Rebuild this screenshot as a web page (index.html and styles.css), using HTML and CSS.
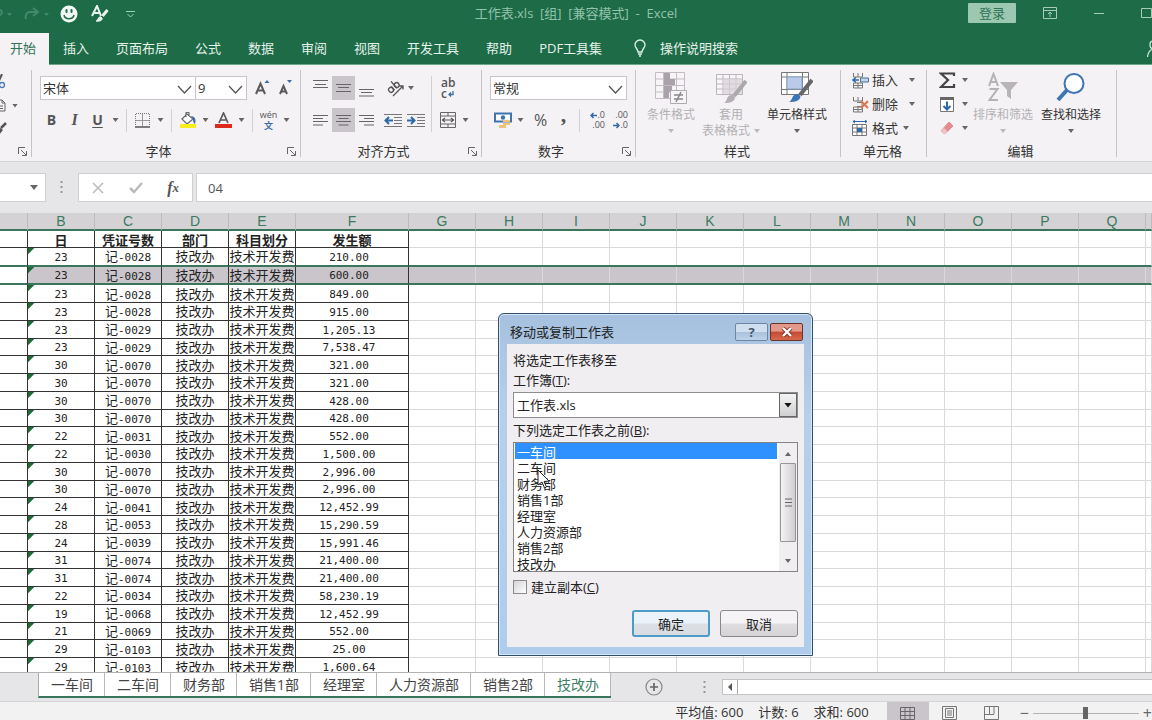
FILE: index.html
```html
<!DOCTYPE html>
<html lang="zh-CN">
<head>
<meta charset="utf-8">
<title>工作表.xls - Excel</title>
<link rel="stylesheet" href="styles.css">
</head>
<body>
<header class="titlebar">
  <div class="quick">
    <svg class="faded" width="14" height="14" viewBox="0 0 14 14"><path d="M-6 8 H-1 C3 8 3 2 -2 3" fill="none" stroke="currentColor" stroke-width="2"/><path d="M7 6h5l-2.500 3z" fill="currentColor"/></svg>
    <svg class="faded" width="28" height="14" viewBox="0 0 28 14"><path d="M14 5H7C3 5 2 9 3 12M10 1l5 4-5 4" fill="none" stroke="currentColor" stroke-width="2"/><path d="M21 6h5l-2.500 3z" fill="currentColor"/></svg>
    <svg width="18" height="18" viewBox="0 0 18 18"><circle cx="9" cy="9" r="8.500" fill="#f3faf5"/><rect x="5.500" y="4" width="2" height="4" rx="1" fill="#1e6b48"/><rect x="10.500" y="4" width="2" height="4" rx="1" fill="#1e6b48"/><path d="M4 10c1 5 9 5 10 0" fill="none" stroke="#1e6b48" stroke-width="1.500"/></svg>
    <svg width="18" height="18" viewBox="0 0 18 18"><path d="M1 11L6 1l4 10M3 8h6" fill="none" stroke="#e9f5ee" stroke-width="2"/><path d="M16.500 5l-5 6" stroke="#e9f5ee" stroke-width="3"/><path d="M5 16c2 0 2-5 5-4 3 2 0 5-5 4z" fill="#e9f5ee" stroke="#e9f5ee"/></svg>
    <svg width="9" height="9" viewBox="0 0 9 9"><path d="M0 1.500h9M1.500 4l3 3 3-3" fill="none" stroke="#9fd0b5"/></svg>
  </div>
  <h1 class="doc-title">工作表.xls&nbsp; [组]&nbsp; [兼容模式]&nbsp; -&nbsp; Excel</h1>
  <div class="window-tools">
    <button class="login">登录</button>
    <button class="wbtn" aria-label="功能区显示选项"><svg width="14" height="12" viewBox="0 0 14 12"><path d="M.5.500h13v11H.500zM.5 3.500h13M7 10V5M5 7l2-2 2 2" fill="none" stroke="currentColor"/></svg></button>
    <button class="wbtn" aria-label="最小化"><svg width="12" height="12" viewBox="0 0 12 12"><path d="M1 6.500h10" stroke="currentColor"/></svg></button>
    <button class="wbtn" aria-label="最大化"><svg width="11" height="12" viewBox="0 0 11 12"><path d="M.5 1.500h10v9H.500z" fill="none" stroke="currentColor"/></svg></button>
  </div>
</header>
<nav class="tabs">
  <button class="tab active">开始</button>
  <button class="tab">插入</button>
  <button class="tab">页面布局</button>
  <button class="tab">公式</button>
  <button class="tab">数据</button>
  <button class="tab">审阅</button>
  <button class="tab">视图</button>
  <button class="tab">开发工具</button>
  <button class="tab">帮助</button>
  <button class="tab">PDF工具集</button>
  <button class="tell-me"><svg width="12" height="18" viewBox="0 0 12 18"><path d="M4 13c0-3-3-4-3-7a5 5 0 0 1 10 0c0 3-3 4-3 7zM4 15h4M5 17h2" fill="none" stroke="currentColor" stroke-width="1.300"/></svg>操作说明搜索</button>
  <svg class="share" width="5" height="18" viewBox="0 0 5 18"><path d="M6 1C2 1 2 8 6 9C2 10 1 13 .500 17" fill="none" stroke="#cfe6d9" stroke-width="1.300"/></svg>
</nav>
<section class="ribbon">
  <div class="group clipboard">
    <div class="group-body clip-tools">
      <svg width="7" height="16" viewBox="0 0 7 16"><path d="M2 0L-2 9" stroke="#555" stroke-width="2"/><circle cx="2" cy="11" r="2.500" fill="none" stroke="#4a7ab5" stroke-width="1.300"/></svg>
      <div class="clip-row"><svg width="6" height="13" viewBox="0 0 6 13"><path d="M-2 1h4l3 3v8h-7M2 1v3h3M-1 7h4M-1 9.500h4" fill="none" stroke="#666"/></svg><i class="caret"></i></div>
      <svg width="7" height="14" viewBox="0 0 7 14"><path d="M6 2L1 7" stroke="#555" stroke-width="2.500"/><path d="M-1 6l4 3-4 5z" fill="#555"/></svg>
    </div>
    <div class="group-foot"><span></span><button class="launch" aria-label="剪贴板设置"><svg width="9" height="9" viewBox="0 0 9 9"><path d="M.5 7V.500H7M3 3l5 5M8.500 4v4.500H4" fill="none" stroke="#666"/></svg></button></div>
  </div>

  <div class="group font">
    <div class="group-body">
      <div class="row">
        <span class="combo font-name"><select aria-label="字体"><option>宋体</option></select><svg width="15" height="9" viewBox="0 0 15 9"><path d="M1 1l6.500 7L14 1" fill="none" stroke="#555" stroke-width="1.300"/></svg></span>
        <span class="combo font-size"><select aria-label="字号"><option>9</option></select><svg width="15" height="9" viewBox="0 0 15 9"><path d="M1 1l6.500 7L14 1" fill="none" stroke="#555" stroke-width="1.300"/></svg></span>
        <button class="ib grow" aria-label="增大字号"><svg width="16" height="17" viewBox="0 0 16 17"><path d="M1 14L5.500 3.500 10 14M2.500 10.500h6" fill="none" stroke="#5a5a5a" stroke-width="2"/><path d="M9.500 3L12 0l2.500 3z" fill="#3a6ea5"/></svg></button>
        <button class="ib" aria-label="减小字号"><svg width="16" height="17" viewBox="0 0 16 17"><path d="M2 14l3.500-8L9 14M3 11.500h5" fill="none" stroke="#5a5a5a" stroke-width="2"/><path d="M9 0h5l-2.500 3z" fill="#3a6ea5"/></svg></button>
      </div>
      <div class="row">
        <button class="ib bold">B</button><button class="ib italic">I</button><button class="ib under">U</button><button class="cb" aria-label="下划线选项"><i class="caret"></i></button>
        <i class="sep"></i>
        <button class="ib" aria-label="边框"><svg width="15" height="15" viewBox="0 0 15 15"><path d="M1 .500h13M.5 1v12M14.500 1v12" stroke="#777" stroke-dasharray="1 1"/><path d="M7.500 1v12M1 7.500h13" stroke="#999"/><path d="M0 14h15" stroke="#555" stroke-width="1.500"/></svg></button><button class="cb" aria-label="边框选项"><i class="caret"></i></button>
        <i class="sep"></i>
        <button class="ib" aria-label="填充颜色"><svg width="18" height="17" viewBox="0 0 18 17"><path d="M3 7l5-5 6 5-6 5zM7 5V1c0-1 3-1 3 0v3" fill="#fff" stroke="#666" stroke-width="1.200"/><path d="M12 4c5 1 5 4 4 8-2-1-2-4-2-5z" fill="#3a6ea5"/><path d="M1 12h16v4H1z" fill="#f8ee1f"/></svg></button><button class="cb" aria-label="填充选项"><i class="caret"></i></button>
        <button class="ib" aria-label="字体颜色"><svg width="17" height="17" viewBox="0 0 17 17"><path d="M4 11L8.500 1 13 11M5.500 8h6" fill="none" stroke="#5a5a5a" stroke-width="1.700"/><path d="M0 12h17v4H0z" fill="#dc2a1c"/></svg></button><button class="cb" aria-label="颜色选项"><i class="caret"></i></button>
        <i class="sep"></i>
        <button class="ib phonetic"><span>wén</span><b>文</b></button><button class="cb" aria-label="拼音选项"><i class="caret"></i></button>
      </div>
    </div>
    <div class="group-foot"><span>字体</span><button class="launch" aria-label="字体设置"><svg width="9" height="9" viewBox="0 0 9 9"><path d="M.5 7V.500H7M3 3l5 5M8.500 4v4.500H4" fill="none" stroke="#666"/></svg></button></div>
  </div>

  <div class="group align">
    <div class="group-body split">
      <div class="stack">
        <div class="row">
          <button class="ib" aria-label="顶端对齐"><svg width="15" height="17" viewBox="0 0 15 17"><path d="M0 .500h15M2 4.500h11M0 7.500h15" stroke="#666" stroke-width="1.200"/></svg></button>
          <button class="ib on" aria-label="垂直居中"><svg width="15" height="17" viewBox="0 0 15 17"><path d="M0 4.500h15M2 7.500h11M0 11.500h15" stroke="#666" stroke-width="1.200"/></svg></button>
          <button class="ib" aria-label="底端对齐"><svg width="15" height="17" viewBox="0 0 15 17"><path d="M0 9.500h15M2 12.500h11M0 16h15" stroke="#666" stroke-width="1.200"/></svg></button>
          <button class="ib orient" aria-label="方向"><svg width="18" height="17" viewBox="0 0 18 17"><g transform="rotate(-40 7 8)" fill="none" stroke="#555" stroke-width="1.400"><ellipse cx="3.500" cy="7.500" rx="2.300" ry="2.500"/><path d="M6 5v5M9 1v9"/><ellipse cx="11" cy="7.500" rx="2.300" ry="2.500"/></g><path d="M6 16L16 6M12.500 6H16v3.500" fill="none" stroke="#555" stroke-width="1.300"/></svg></button><button class="cb tight" aria-label="方向选项"><i class="caret"></i></button>
        </div>
        <div class="row">
          <button class="ib" aria-label="左对齐"><svg width="15" height="15" viewBox="0 0 15 15"><path d="M0 2.500h15M0 5.500h10M0 8.500h15M0 12h10" stroke="#666" stroke-width="1.200"/></svg></button>
          <button class="ib on" aria-label="居中"><svg width="15" height="15" viewBox="0 0 15 15"><path d="M0 2.500h15M2.500 5.500h10M0 8.500h15M2.500 12h10" stroke="#666" stroke-width="1.200"/></svg></button>
          <button class="ib" aria-label="右对齐"><svg width="15" height="15" viewBox="0 0 15 15"><path d="M0 2.500h15M5 5.500h10M0 8.500h15M5 12h10" stroke="#666" stroke-width="1.200"/></svg></button>
          <button class="ib indent" aria-label="减少缩进"><svg width="18" height="15" viewBox="0 0 18 15"><path d="M0 1.500h18M10 4.500h8M10 7.500h8M10 10.500h8M0 13.500h18" stroke="#777"/><path d="M9 7.500H2M5 4L1.500 7.500 5 11" fill="none" stroke="#2f68a8" stroke-width="2"/></svg></button>
          <button class="ib" aria-label="增加缩进"><svg width="18" height="15" viewBox="0 0 18 15"><path d="M0 1.500h18M10 4.500h8M10 7.500h8M10 10.500h8M0 13.500h18" stroke="#777"/><path d="M0 7.500h7M4 4l3.500 3.500L4 11" fill="none" stroke="#2f68a8" stroke-width="2"/></svg></button>
        </div>
      </div>
      <i class="sep tall"></i>
      <div class="stack">
        <div class="row"><button class="ib wrap"><span>ab</span><span>c<svg width="6" height="6" viewBox="0 0 6 6"><path d="M5 0v3.500H1M3 1.500l-2 2 2 2" fill="none" stroke="#3a6ea5" stroke-width="1.300"/></svg></span></button></div>
        <div class="row"><button class="ib" aria-label="合并后居中"><svg width="16" height="16" viewBox="0 0 16 16"><path d="M.5.500h15v15H.500zM.5 4h15M.5 12h15M8 .500V4M8 12v3.500" fill="none" stroke="#666"/><path d="M2.500 8h11M5 6L2.500 8 5 10M11 6l2.500 2L11 10" fill="none" stroke="#555" stroke-width="1.200"/></svg></button><button class="cb" aria-label="合并选项"><i class="caret"></i></button></div>
      </div>
    </div>
    <div class="group-foot"><span>对齐方式</span><button class="launch" aria-label="对齐设置"><svg width="9" height="9" viewBox="0 0 9 9"><path d="M.5 7V.500H7M3 3l5 5M8.500 4v4.500H4" fill="none" stroke="#666"/></svg></button></div>
  </div>

  <div class="group number">
    <div class="group-body">
      <div class="row"><span class="combo format"><select aria-label="数字格式"><option>常规</option></select><svg width="15" height="9" viewBox="0 0 15 9"><path d="M1 1l6.500 7L14 1" fill="none" stroke="#555" stroke-width="1.300"/></svg></span></div>
      <div class="row">
        <button class="ib money" aria-label="会计格式"><svg width="18" height="17" viewBox="0 0 18 17"><path d="M1 1.500h16v8H1z" fill="#fff" stroke="#3f74ad" stroke-width="2"/><circle cx="9" cy="5.500" r="2.200" fill="#3f74ad"/><path d="M9 8h7v2H9zM9 11h7v2H9zM5 13h7v3H5z" fill="#efc37b"/></svg></button><button class="cb" aria-label="货币选项"><i class="caret"></i></button>
        <button class="ib percent">%</button><button class="ib comma">,</button>
        <i class="sep"></i>
        <button class="ib digits"><span><svg width="7" height="7" viewBox="0 0 7 7"><path d="M7 3.500H1M3.500 1L1 3.500 3.500 6" fill="none" stroke="#2f68a8" stroke-width="1.500"/></svg>.0</span><span>.00</span></button>
        <button class="ib digits"><span>.00</span><span><svg width="7" height="7" viewBox="0 0 7 7"><path d="M0 3.500h6M3.500 1L6 3.500 3.500 6" fill="none" stroke="#2f68a8" stroke-width="1.500"/></svg>.0</span></button>
      </div>
    </div>
    <div class="group-foot"><span>数字</span><button class="launch" aria-label="数字设置"><svg width="9" height="9" viewBox="0 0 9 9"><path d="M.5 7V.500H7M3 3l5 5M8.500 4v4.500H4" fill="none" stroke="#666"/></svg></button></div>
  </div>

  <div class="group style">
    <div class="group-body bigs">
      <button class="big" disabled><svg width="32" height="32" viewBox="0 0 32 32"><path d="M.5.500h29v26H.500zM.5 7h29M.5 13.500h29M.5 20h29M8.500.500v26M21.500.500v26" fill="#f8f5f8" stroke="#c3bcc3"/><path d="M9 1h6v6H9zM9 7h11v6H9zM9 14h8v6H9zM9 20h5v6H9z" fill="#aaa2aa"/><path d="M15.500 18.500h16v13h-16z" fill="#f8f5f8" stroke="#b0a9b0"/><path d="M19 23h9M19 27h9M26 20l-5 10" stroke="#888" stroke-width="1.500"/></svg><span>条件格式</span><i class="caret"></i></button>
      <button class="big" disabled><svg width="32" height="32" viewBox="0 0 32 32"><path d="M1.500 2.500h26v20h-26zM1.500 7h26M1.500 12h26M1.500 17h26M8 2v20M14.500 2v20M21 2v20" fill="#f8f5f8" stroke="#bcb5bc"/><path d="M8 7h19v15H8z" fill="#d9d2d9" opacity=".7"/><path d="M31 9L19 24" stroke="#aaa" stroke-width="4"/><path d="M9 31c4-2 2-9 9-8 5 3 0 9-9 8z" fill="#b5afb5"/></svg><span>套用</span><span>表格格式 <i class="caret"></i></span></button>
      <button class="big wide"><svg width="32" height="32" viewBox="0 0 32 32"><path d="M.5.500h27v22H.500zM.5 5h27M.5 17.500h27M6 .500v22M21.500.500v22" fill="#fff" stroke="#777"/><path d="M6 5h15v12H6z" fill="#b9cbe8" stroke="#8aa5ca"/><path d="M31 8L19 23" stroke="#666" stroke-width="4"/><path d="M8 30c4-2 3-9 9-8 6 3 0 9-9 8z" fill="#3a76b4"/></svg><span>单元格样式</span><i class="caret"></i></button>
    </div>
    <div class="group-foot"><span>样式</span></div>
  </div>

  <div class="group cells">
    <div class="group-body lines">
      <button class="line"><svg width="17" height="17" viewBox="0 0 17 17"><path d="M1.500 1v4h9V1M6 1v4M1.500 11v5h9v-5zM6 11v5M1.500 13.500h9" fill="none" stroke="#777"/><path d="M8.500 6h8v4h-8z" fill="#c5d4e8" stroke="#4d6f99"/><path d="M7 8H1M4 5.500L1 8l3 2.500" fill="none" stroke="#2f68a8" stroke-width="1.500"/></svg>插入<i class="caret"></i></button>
      <button class="line"><svg width="17" height="17" viewBox="0 0 17 17"><path d="M1.500 1v4h9V1M6 1v4M1.500 11v5h9v-5zM6 11v5M1.500 13.500h9M5 6.500h5v4H5" fill="none" stroke="#777"/><path d="M9 5l7 7M16 5l-7 7" stroke="#dc7550" stroke-width="2"/></svg>删除<i class="caret"></i></button>
      <button class="line last"><svg width="17" height="17" viewBox="0 0 17 17"><path d="M.5 4.500h14v11H.500zM.5 8h14M.5 12h14M5 4v12M10 4v12" fill="#fff" stroke="#777"/><path d="M5 8h5v4H5z" fill="#2f68a8"/><path d="M1 1.500h14M3 0L1 1.500 3 3M13 0l2 1.500L13 3" fill="none" stroke="#2f68a8"/></svg>格式<i class="caret"></i></button>
    </div>
    <div class="group-foot"><span>单元格</span></div>
  </div>

  <div class="group editing">
    <div class="group-body bigs">
      <div class="lines narrow">
        <button class="line" aria-label="自动求和"><svg width="17" height="17" viewBox="0 0 17 17"><path d="M15 4V1.500H2L9 8l-7 7h13v-3" fill="none" stroke="#444" stroke-width="2.200"/></svg><i class="caret"></i></button>
        <button class="line" aria-label="填充"><svg width="17" height="17" viewBox="0 0 17 17"><path d="M1.500 1.500h13v14h-13z" fill="#fff" stroke="#777"/><path d="M1 1h14v3H1z" fill="#666"/><path d="M8 5.500v8M4.500 10L8 13.500l3.500-3.500" fill="none" stroke="#2f68a8" stroke-width="2"/></svg><i class="caret"></i></button>
        <button class="line" aria-label="清除"><svg width="17" height="17" viewBox="0 0 17 17"><path d="M10 2l4 4-8 8-4-3z" fill="#e48b92" stroke="#e48b92" stroke-linejoin="round"/><path d="M5 8l4 4-2 2H4l-2-3z" fill="#f0c3c6"/></svg><i class="caret"></i></button>
      </div>
      <button class="big sort" disabled><svg width="32" height="32" viewBox="0 0 32 32"><path d="M2 14L6.500 2 11 14M3.500 10h6M2.500 17h8L2.500 28h8.500" fill="none" stroke="#b3b3b3" stroke-width="2"/><path d="M13 10h18l-7 8v9l-4-3v-6z" fill="#b8b4b8"/></svg><span>排序和筛选</span><i class="caret"></i></button>
      <button class="big find"><svg width="32" height="32" viewBox="0 0 32 32"><circle cx="19" cy="11.500" r="9.500" fill="#fff" stroke="#3f74b3" stroke-width="2"/><path d="M12 18L3 28" stroke="#3f74b3" stroke-width="4"/></svg><span>查找和选择</span><i class="caret"></i></button>
    </div>
    <div class="group-foot"><span>编辑</span></div>
  </div>
</section>

<section class="formula-bar">
  <button class="name-box" aria-label="名称框"><i class="caret"></i></button>
  <svg class="grip" width="3" height="13" viewBox="0 0 3 13"><path d="M1.500 0v13" stroke="#999" stroke-width="2" stroke-dasharray="2 3"/></svg>
  <div class="fx-tools">
    <button aria-label="取消输入"><svg width="12" height="12" viewBox="0 0 12 12"><path d="M1 1l10 10M11 1L1 11" stroke="#bbb" stroke-width="1.500"/></svg></button>
    <button aria-label="输入"><svg width="14" height="12" viewBox="0 0 14 12"><path d="M1 6l4 4 8-9" fill="none" stroke="#bbb" stroke-width="2.500"/></svg></button>
    <button class="fx">f<sub>x</sub></button>
  </div>
  <input class="formula" type="text" value="04" aria-label="编辑栏">
</section>

<main class="sheet">
  <table>
    <colgroup><col class="ca"><col class="cw"><col class="cw"><col class="cw"><col class="cw"><col class="cf"><col class="cw"><col class="cw"><col class="cw"><col class="cw"><col class="cw"><col class="cw"><col class="cw"><col class="cw"><col class="cw"><col class="cw"><col class="cw"><col></colgroup>
    <thead><tr><th></th><th>B</th><th>C</th><th>D</th><th>E</th><th>F</th><th>G</th><th>H</th><th>I</th><th>J</th><th>K</th><th>L</th><th>M</th><th>N</th><th>O</th><th>P</th><th>Q</th><th></th></tr></thead>
    <tbody>
    <tr class="names"><td></td><td>日</td><td>凭证号数</td><td>部门</td><td>科目划分</td><td>发生额</td><td class="rest" colspan="12"></td></tr>
    <tr class="above"><td></td><td class="flag">23</td><td><span>记</span>-0028</td><td><span>技改办</span></td><td><span>技术开发费</span></td><td class="amt">210.00</td><td class="rest" colspan="12"></td></tr>
    <tr class="selected"><td></td><td class="flag">23</td><td><span>记</span>-0028</td><td><span>技改办</span></td><td><span>技术开发费</span></td><td class="amt">600.00</td><td class="rest" colspan="12"></td></tr>
    <tr><td></td><td class="flag">23</td><td><span>记</span>-0028</td><td><span>技改办</span></td><td><span>技术开发费</span></td><td class="amt">849.00</td><td class="rest" colspan="12"></td></tr>
    <tr><td></td><td class="flag">23</td><td><span>记</span>-0028</td><td><span>技改办</span></td><td><span>技术开发费</span></td><td class="amt">915.00</td><td class="rest" colspan="12"></td></tr>
    <tr><td></td><td class="flag">23</td><td><span>记</span>-0029</td><td><span>技改办</span></td><td><span>技术开发费</span></td><td class="amt">1,205.13</td><td class="rest" colspan="12"></td></tr>
    <tr><td></td><td class="flag">23</td><td><span>记</span>-0029</td><td><span>技改办</span></td><td><span>技术开发费</span></td><td class="amt">7,538.47</td><td class="rest" colspan="12"></td></tr>
    <tr><td></td><td class="flag">30</td><td><span>记</span>-0070</td><td><span>技改办</span></td><td><span>技术开发费</span></td><td class="amt">321.00</td><td class="rest" colspan="12"></td></tr>
    <tr><td></td><td class="flag">30</td><td><span>记</span>-0070</td><td><span>技改办</span></td><td><span>技术开发费</span></td><td class="amt">321.00</td><td class="rest" colspan="12"></td></tr>
    <tr><td></td><td class="flag">30</td><td><span>记</span>-0070</td><td><span>技改办</span></td><td><span>技术开发费</span></td><td class="amt">428.00</td><td class="rest" colspan="12"></td></tr>
    <tr><td></td><td class="flag">30</td><td><span>记</span>-0070</td><td><span>技改办</span></td><td><span>技术开发费</span></td><td class="amt">428.00</td><td class="rest" colspan="12"></td></tr>
    <tr><td></td><td class="flag">22</td><td><span>记</span>-0031</td><td><span>技改办</span></td><td><span>技术开发费</span></td><td class="amt">552.00</td><td class="rest" colspan="12"></td></tr>
    <tr><td></td><td class="flag">22</td><td><span>记</span>-0030</td><td><span>技改办</span></td><td><span>技术开发费</span></td><td class="amt">1,500.00</td><td class="rest" colspan="12"></td></tr>
    <tr><td></td><td class="flag">30</td><td><span>记</span>-0070</td><td><span>技改办</span></td><td><span>技术开发费</span></td><td class="amt">2,996.00</td><td class="rest" colspan="12"></td></tr>
    <tr><td></td><td class="flag">30</td><td><span>记</span>-0070</td><td><span>技改办</span></td><td><span>技术开发费</span></td><td class="amt">2,996.00</td><td class="rest" colspan="12"></td></tr>
    <tr><td></td><td class="flag">24</td><td><span>记</span>-0041</td><td><span>技改办</span></td><td><span>技术开发费</span></td><td class="amt">12,452.99</td><td class="rest" colspan="12"></td></tr>
    <tr><td></td><td class="flag">28</td><td><span>记</span>-0053</td><td><span>技改办</span></td><td><span>技术开发费</span></td><td class="amt">15,290.59</td><td class="rest" colspan="12"></td></tr>
    <tr><td></td><td class="flag">24</td><td><span>记</span>-0039</td><td><span>技改办</span></td><td><span>技术开发费</span></td><td class="amt">15,991.46</td><td class="rest" colspan="12"></td></tr>
    <tr><td></td><td class="flag">31</td><td><span>记</span>-0074</td><td><span>技改办</span></td><td><span>技术开发费</span></td><td class="amt">21,400.00</td><td class="rest" colspan="12"></td></tr>
    <tr><td></td><td class="flag">31</td><td><span>记</span>-0074</td><td><span>技改办</span></td><td><span>技术开发费</span></td><td class="amt">21,400.00</td><td class="rest" colspan="12"></td></tr>
    <tr><td></td><td class="flag">22</td><td><span>记</span>-0034</td><td><span>技改办</span></td><td><span>技术开发费</span></td><td class="amt">58,230.19</td><td class="rest" colspan="12"></td></tr>
    <tr><td></td><td class="flag">19</td><td><span>记</span>-0068</td><td><span>技改办</span></td><td><span>技术开发费</span></td><td class="amt">12,452.99</td><td class="rest" colspan="12"></td></tr>
    <tr><td></td><td class="flag">21</td><td><span>记</span>-0069</td><td><span>技改办</span></td><td><span>技术开发费</span></td><td class="amt">552.00</td><td class="rest" colspan="12"></td></tr>
    <tr><td></td><td class="flag">29</td><td><span>记</span>-0103</td><td><span>技改办</span></td><td><span>技术开发费</span></td><td class="amt">25.00</td><td class="rest" colspan="12"></td></tr>
    <tr><td></td><td class="flag">29</td><td><span>记</span>-0103</td><td><span>技改办</span></td><td><span>技术开发费</span></td><td class="amt">1,600.64</td><td class="rest" colspan="12"></td></tr>
    </tbody>
  </table>
</main>

<footer class="bottom">
  <div class="sheet-bar">
    <div class="sheet-tabs">
      <button>一车间</button><button>二车间</button><button>财务部</button><button>销售1部</button><button>经理室</button><button>人力资源部</button><button>销售2部</button><button class="current">技改办</button>
    </div>
    <button class="add" aria-label="新工作表"><svg width="18" height="18" viewBox="0 0 18 18"><circle cx="9" cy="9" r="8" fill="none" stroke="#888" stroke-width="1.200"/><path d="M5 9h8M9 5v8" stroke="#666" stroke-width="1.700"/></svg></button>
    <svg class="grip" width="3" height="13" viewBox="0 0 3 13"><path d="M1.500 0v13" stroke="#999" stroke-width="2" stroke-dasharray="2 3"/></svg>
    <div class="hscroll"><button aria-label="向左滚动"><svg width="6" height="8" viewBox="0 0 6 8"><path d="M5 0v8L1 4z" fill="#555"/></svg></button></div>
  </div>
  <div class="status">
    <span>平均值: 600</span><span>计数: 6</span><span class="sum">求和: 600</span>
    <button class="view on" aria-label="普通"><svg width="15" height="13" viewBox="0 0 15 13"><path d="M.5.500h14v12H.500zM.5 4.500h14M.5 8.500h14M5 .500v12M10 .500v12" fill="none" stroke="#666"/></svg></button>
    <button class="view" aria-label="页面布局"><svg width="15" height="14" viewBox="0 0 15 14"><path d="M.5.500h14v13H.500zM3.500 2.500h8v9h-8zM5 5h5M5 7h5M5 9h5" fill="none" stroke="#777"/></svg></button>
    <button class="view" aria-label="分页预览"><svg width="15" height="14" viewBox="0 0 15 14"><path d="M.5.500h14v13H.500zM5.500.500V8M10 .500V8M0 8.500h10" fill="none" stroke="#777"/></svg></button>
    <div class="zoom"><span>−</span><input type="range" aria-label="缩放" value="50"><span>+</span></div>
  </div>
</footer>

<section class="dialog" role="dialog" aria-labelledby="dlg-title">
  <div class="dlg-head">
    <h2 id="dlg-title">移动或复制工作表</h2>
    <button class="help" aria-label="帮助">?</button>
    <button class="close" aria-label="关闭"><svg width="12" height="10" viewBox="0 0 12 10"><path d="M2 1l8 8M10 1L2 9" stroke="#7a3028" stroke-width="4"/><path d="M2 1l8 8M10 1L2 9" stroke="#fff" stroke-width="2.400"/></svg></button>
  </div>
  <div class="dlg-body">
    <p>将选定工作表移至</p>
    <label for="book">工作簿(<u>T</u>):</label>
    <div class="drop"><select id="book"><option>工作表.xls</option></select><span class="drop-btn"><i class="caret"></i></span></div>
    <label for="before">下列选定工作表之前(<u>B</u>):</label>
    <div class="listbox">
      <select id="before" size="8"><option selected>一车间</option><option>二车间</option><option>财务部</option><option>销售1部</option><option>经理室</option><option>人力资源部</option><option>销售2部</option><option>技改办</option></select>
      <div class="scroll"><i class="caret up"></i><div class="thumb"><svg width="7" height="9" viewBox="0 0 7 9"><path d="M0 1h7M0 4.500h7M0 8h7" stroke="#666"/></svg></div><i class="caret"></i></div>
      <svg class="cursor" width="14" height="21" viewBox="0 0 14 21"><path d="M1 1v15l4-3 2.500 6 2-1L7 12.500l5-.5z" fill="#fff" stroke="#222"/></svg>
    </div>
    <label class="copy"><input type="checkbox"><span>建立副本(<u>C</u>)</span></label>
    <div class="actions"><button class="ok">确定</button><button>取消</button></div>
  </div>
</section>
</body>
</html>
```

FILE: styles.css
```css
* { box-sizing: border-box; }
body {
  margin: 0;
  height: 100vh;
  position: relative;
  overflow: hidden;
  display: flex;
  flex-direction: column;
  background: #e6e5e7;
  color: #333;
  font: 13px/18px "Open Sans", "Noto Sans CJK SC", sans-serif;
}
button, select, input { font: inherit; color: inherit; margin: 0; padding: 0; border: 0; background: none; }
button { display: flex; align-items: center; justify-content: center; white-space: nowrap; }
select { appearance: none; outline: 0; }
h1, h2, p { margin: 0; font-size: 13px; font-weight: 400; }
svg { display: block; flex: none; }

.caret { flex: none; display: inline-block; width: 6px; height: 4px; background: #666; clip-path: polygon(0 0, 100% 0, 50% 100%); }
.caret.up { clip-path: polygon(50% 0, 100% 100%, 0 100%); }

/* Title bar */
.titlebar { flex: none; height: 33px; display: grid; grid-template-columns: 1fr auto 1fr; background: #1e6b48; color: #93c3aa; }
.quick { display: flex; align-items: center; height: 28px; gap: 13px; }
.quick .faded { color: #43886a; margin-right: -4px; }
.quick svg:last-child { margin-left: 4px; }
.doc-title { line-height: 26px; }
.window-tools { display: flex; justify-content: flex-end; align-items: center; height: 25px; gap: 36px; }
.login { width: 48px; height: 20px; margin-right: -9px; background: #9cc8b2; color: #2f7355; border-radius: 1px; }
.wbtn { color: #a5cdb8; }

/* Ribbon tabs */
.tabs { flex: none; height: 32px; display: flex; gap: 1px; background: #1e6b48; color: #e4f2ea; border-bottom: 1px solid #6fa58b; }
.tab { padding: 0 13px; height: 31px; padding-bottom: 2px; }
.tab.active { width: 49px; height: 32px; background: #f4f2f4; color: #2f7355; padding-right: 13px; padding-left: 10px; }
.tell-me { gap: 14px; margin-left: 18px; padding-bottom: 1px; }
.share { margin-left: auto; align-self: center; }

/* Ribbon */
.ribbon { flex: none; height: 97px; display: flex; background: #f4f2f4; border-bottom: 1px solid #d3d1d4; }
.group { display: flex; flex-direction: column; flex: none; margin: 5px 0 4px; border-right: 1px solid #c6c3c7; }
.group-body { flex: 1; padding: 6px 0 0 8px; display: flex; flex-direction: column; gap: 8px; min-height: 0; }
.group-foot { height: 11px; display: flex; align-items: center; padding-right: 2px; line-height: 11px; }
.group-foot span { flex: 1; text-align: center; }
.launch { width: 13px; height: 11px; }
.clipboard { width: 32px; }
.font { width: 269px; }
.align { width: 181px; }
.number { width: 154px; }
.style { width: 205px; }
.cells { width: 86px; }
.editing { width: 190px; }
.row { display: flex; align-items: center; height: 24px; }
.ib { width: 23px; height: 24px; color: #555; flex: none; }
.ib.on { background: #c9c5ca; }
.cb { width: 13px; height: 24px; flex: none; }
.sep { width: 1px; height: 23px; background: #d2cfd3; margin: 0 4px; }
.sep.tall { height: 56px; }
.clip-tools { padding: 4px 0 0; gap: 9px; }
.clip-row { display: flex; align-items: center; gap: 6px; }
.combo { display: flex; position: relative; height: 24px; background: #fff; border: 1px solid #c9c6ca; }
.combo select { width: 100%; padding-left: 2px; line-height: 22px; }
.combo svg { position: absolute; right: 3px; top: 8px; pointer-events: none; }
.font-name { width: 156px; }
.font-size { width: 51px; border-left: 0; }
.grow { margin-left: 4px; }
.bold { font-weight: 700; font-size: 14px; }
.italic { font: italic 700 16px "Liberation Serif", serif; }
.under { font-weight: 700; font-size: 14px; text-decoration: underline; text-underline-offset: 2px; }
.phonetic { flex-direction: column; font-size: 9px; line-height: 11px; }
.phonetic b { color: #3a6ea5; }
.split { flex-direction: row; gap: 0; }
.stack { display: flex; flex-direction: column; gap: 8px; }
.orient { margin-left: 6px; }
.tight { width: 8px; }
.indent { margin-left: 3px; }
.wrap { flex-direction: column; font-size: 12px; font-weight: 600; line-height: 11px; align-items: flex-start; padding-left: 5px; }
.wrap span { display: flex; align-items: center; gap: 1px; }
.format { width: 137px; }
.money { margin-left: 1px; }
.percent { font-size: 16px; margin-left: 2px; }
.comma { font: 700 22px/8px "Liberation Serif", serif; padding-bottom: 10px; }
.digits { flex-direction: column; font-size: 9px; line-height: 10px; align-items: flex-end; padding-right: 2px; }
.digits span { display: flex; align-items: center; }

.group-body.bigs { flex-direction: row; padding: 2px 0 0 5px; gap: 0; }
.big { flex-direction: column; justify-content: flex-start; width: 60px; font-size: 12px; line-height: 16px; }
.big span { display: flex; align-items: center; gap: 4px; }
.big svg { margin-bottom: 3px; }
.big .caret { margin-top: 6px; }
.big span .caret { margin-top: 0; }
.big.wide { width: 72px; }
.big.sort { width: 64px; margin-left: 3px; }
.big.find { width: 72px; }
.big:disabled { color: #b3b0b4; }
.big:disabled .caret { background: #bcb9bd; }
.group-body.lines { padding: 0 0 0 11px; }
.lines { display: flex; flex-direction: column; }
.group-body.lines, .lines { gap: 4px; }
.lines .line { height: 20px; justify-content: flex-start; gap: 3px; }
.lines .line .caret { margin-left: 8px; }
.lines .last .caret { margin-left: 2px; }
.narrow { padding-left: 7px; }
.lines.narrow { margin-top: -2px; }
.lines.narrow .line { gap: 6px; }
.lines.narrow .caret { margin-left: 0; }

/* Formula bar */
.formula-bar { flex: none; height: 51px; display: flex; align-items: center; color: #555; }
.formula-bar > * { height: 29px; }
.name-box { width: 46px; background: #fff; border: 1px solid #d0ced1; border-left: 0; justify-content: flex-end; padding-right: 7px; }
.name-box .caret { width: 8px; height: 5px; }
.formula-bar .grip { height: 13px; margin: 0 15px 0 14px; }
.fx-tools { display: flex; width: 115px; background: #fff; border: 1px solid #d0ced1; }
.fx-tools button { flex: 1; }
.fx { font: italic 700 16px "Liberation Serif", serif; }
.fx sub { font-size: 13px; line-height: 8px; }
.formula { flex: 1; min-width: 0; margin-left: 3px; padding-left: 11px; background: #fff; border: 1px solid #d0ced1; border-right: 0; }

/* Worksheet */
.sheet { flex: 1; min-height: 0; overflow: hidden; background: #fff; }
.sheet table { width: 100%; height: 463px; table-layout: fixed; border-collapse: separate; border-spacing: 0; }
.ca { width: 28px; }
.cw { width: 67px; }
.cf { width: 113px; }
.sheet th { height: 18px; padding: 0; background: #d4d2d5; border-right: 1px solid #bdbbbe; border-bottom: 2px solid #3a765b; color: #3c7a60; font: 14px/15px "Liberation Sans", Arial, sans-serif; }
.sheet td { padding: 2px 0 0; text-align: center; white-space: nowrap; color: #222; border-right: 1px solid #333; border-bottom: 1px solid #333; font: 11px/13px "DejaVu Sans Mono", "Noto Sans CJK SC", monospace; }
.sheet td span { font-size: 13px; }
.sheet .names td { font-family: "Noto Sans CJK SC", sans-serif; font-size: 13px; font-weight: 700; }
.sheet td.amt { padding-right: 6px; }
.sheet .flag { background: linear-gradient(135deg, #1d6b35 4px, transparent 5px); }
.sheet td.rest { border-color: #dad9db; background: repeating-linear-gradient(90deg, transparent 0 66px, #dad9db 66px 67px); }
.sheet .selected td { background-color: #cac5cb; border-bottom: 2px solid #3a765b; }
.sheet .selected td:first-child { background-color: #fff; }
.sheet .above td { border-bottom: 2px solid #3a765b; }

/* Sheet tabs and status bar */
.bottom { flex: none; height: 48px; overflow: hidden; }
.sheet-bar { height: 30px; display: flex; align-items: center; border-top: 1px solid #b3b1b4; border-bottom: 1px solid #d5d3d6; padding-left: 38px; }
.sheet-tabs { display: flex; align-self: flex-start; height: 25px; background: #fff; border-bottom: 2px solid #3a765b; border-left: 1px solid #aaa; font-size: 14px; color: #444; }
.sheet-tabs button { padding: 0 11px 0 12px; border-right: 1px solid #b9b7ba; }
.sheet-tabs .current { color: #3c7f61; }
.add { margin: 0 40px 0 34px; }
.hscroll { flex: 1; height: 16px; margin-left: 16px; background: #fff; border: 1px solid #c4c2c5; border-right: 0; display: flex; }
.hscroll button { width: 15px; border-right: 1px solid #aaa; }
.status { height: 22px; display: flex; justify-content: flex-end; background: #f3f2f3; line-height: 21px; }
.status > span { margin-right: 15px; }
.status .sum { margin-right: 18px; }
.view { width: 42px; height: 22px; }
.view.on { background: #c9c5ca; }
.zoom { display: flex; align-items: center; gap: 4px; margin-left: 7px; font-size: 16px; color: #666; }
.zoom input { appearance: none; width: 106px; height: 18px; margin: 0; background: linear-gradient(#b5b3b6, #b5b3b6) center / 100% 1px no-repeat; }
.zoom input::-webkit-slider-thumb { appearance: none; width: 5px; height: 12px; background: #666; }

/* Move or copy dialog */
.dialog { position: absolute; left: 498px; top: 313px; width: 315px; padding: 0 8px 8px; background: linear-gradient(#a6c1df, #b6cfea 30%, #aecdec); border: 1px solid #31506b; border-radius: 6px 6px 0 0; box-shadow: inset 0 0 0 1px #d5e6f6; color: #222; }
.dlg-head { display: flex; height: 30px; align-items: center; padding: 6px 1px 0 3px; }
.dlg-head h2 { flex: 1; }
.help, .close { width: 33px; height: 18px; border: 1px solid #6d86a3; border-radius: 2px; background: linear-gradient(#cfdff0 50%, #a9c0db 50%, #bdd3ea); font-weight: 700; color: #47566b; }
.close { margin-left: 2px; border-color: #6b332f; background: linear-gradient(#e2998a 45%, #c44a32 50%, #d7694c); }
.dlg-body { padding: 6px 6px 10px; background: #f1eef2; display: flex; flex-direction: column; }
.dlg-body p { line-height: 20px; }
.dlg-body > label { line-height: 20px; }
.drop { display: flex; height: 26px; margin: 2px 0; border: 1px solid #8f8d91; background: #fff; }
.drop select { flex: 1; padding-left: 3px; }
.drop-btn { width: 18px; display: flex; align-items: center; justify-content: center; border: 1px solid #666; background: linear-gradient(#f4f4f4, #cfcfd1); }
.drop .caret { width: 8px; height: 5px; background: #111; }
.listbox { position: relative; display: flex; height: 130px; margin-top: 2px; border: 1px solid #858387; background: #fff; }
.listbox select { flex: 1; height: 128px; overflow: hidden; padding-left: 1px; border-radius: 0; }
.listbox option { display: flex; align-items: center; height: 16px; min-height: 16px; line-height: 14px; padding: 0 2px; }
.listbox option:checked { background: #2f91ff linear-gradient(#2f91ff, #2f91ff); color: #fff; }
.scroll { width: 18px; margin-left: 2px; display: flex; flex-direction: column; align-items: center; padding: 9px 1px 8px; background: #f0eef1; }
.thumb { width: 16px; height: 79px; margin: 7px 0 auto; display: flex; align-items: center; justify-content: center; border: 1px solid #97959a; border-radius: 1px; background: linear-gradient(90deg, #f3f3f4, #d0ced2); }
.cursor { position: absolute; left: 23px; top: 26px; }
.dlg-body > .copy { display: flex; align-items: center; gap: 4px; margin-top: 5px; }
.copy input { appearance: none; width: 14px; height: 14px; border: 1px solid #8c8a8e; background: linear-gradient(135deg, #d5d3d7, #fff); }
.actions { display: flex; justify-content: flex-end; gap: 10px; margin-top: 13px; }
.actions button { width: 78px; height: 27px; border: 1px solid #8a888c; border-radius: 3px; background: linear-gradient(#f5f3f6 48%, #e0dde1 52%, #d6d3d7); }
.actions .ok { border: 2px solid #4c9cc9; background: linear-gradient(#eaf3f9 48%, #dddfe4 52%, #d9dce1); }
```
